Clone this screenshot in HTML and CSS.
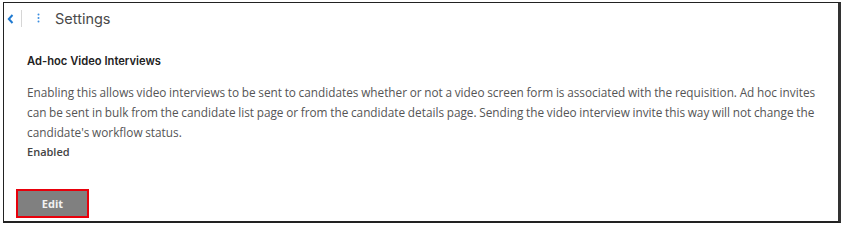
FILE: index.html
```html
<html>
	<head>
		<title>Settings</title>
		<meta name="viewport" content="width=device-width, initial-scale=1.0">
		<link rel="stylesheet" href="styles.css">
	</head>
	<body>
		<div class="frame">
			<div class="topbar">
				<span class="back">
					<svg width="7" height="10" viewBox="0 0 7 10"><path d="M5.5 1 L1.8 5 L5.5 9" fill="none" stroke="#1f7ad1" stroke-width="2"/></svg>
				</span>
				<span class="sep"></span>
				<span class="kebab">
					<svg width="3" height="10" viewBox="0 0 3 10"><circle cx="1.5" cy="1.5" r="1" fill="#3d8fe0"/><circle cx="1.5" cy="5" r="1" fill="#3d8fe0"/><circle cx="1.5" cy="8.5" r="1" fill="#3d8fe0"/></svg>
				</span>
				<span class="title">Settings</span>
			</div>
			<div class="content">
				<div class="heading">Ad-hoc Video Interviews</div>
				<p class="desc">Enabling this allows video interviews to be sent to candidates whether or not a video screen form is associated with the requisition. Ad hoc invites<br>can be sent in bulk from the candidate list page or from the candidate details page. Sending the video interview invite this way will not change the<br>candidate's workflow status.</p>
				<div class="status">Enabled</div>
			</div>
			<div class="actions">
				<div class="btn-edit">Edit</div>
			</div>
		</div>
	</body>
</html>
```

FILE: styles.css
```css
body {
	margin: 0;
	background: #ffffff;
	font-family: "Open Sans", sans-serif;
}
.frame {
	margin: 2px 4px 0 3px;
	height: 221px;
	border: 1px solid #222;
	border-right: 3px solid #333;
	border-bottom: 2px solid #222;
	box-sizing: border-box;
	display: flex;
	flex-direction: column;
}
.topbar {
	display: flex;
	align-items: center;
	height: 28px;
	padding-top: 1px;
}
.back {
	display: flex;
	margin-left: 3px;
	margin-top: 2px;
}
.sep {
	width: 1px;
	height: 17px;
	background: #d6d6d6;
	margin-left: 7px;
}
.kebab {
	display: flex;
	margin-left: 15px;
}
.title {
	margin-left: 15px;
	font-family: "Inter", sans-serif;
	font-size: 14.5px;
	color: #4a4a4a;
}
.content {
	padding: 0 0 0 23px;
}
.heading {
	margin-top: 22px;
	font-family: "Inter", sans-serif;
	font-weight: 600;
	font-size: 11.2px;
	color: #222;
}
.desc {
	margin: 14px 0 0 0;
	font-size: 11.8px;
	line-height: 20px;
	color: #555;
	white-space: nowrap;
	word-spacing: -0.4px;
}
.status {
	margin-top: 2px;
	font-size: 11px;
	font-weight: 600;
	color: #444;
}
.actions {
	margin-top: auto;
	padding: 0 0 3px 12px;
}
.btn-edit {
	width: 69px;
	height: 25px;
	background: #808080;
	border: 2px solid #e8000b;
	color: #f2f2f2;
	font-size: 11px;
	font-weight: 700;
	text-align: center;
	line-height: 25px;
}
```
